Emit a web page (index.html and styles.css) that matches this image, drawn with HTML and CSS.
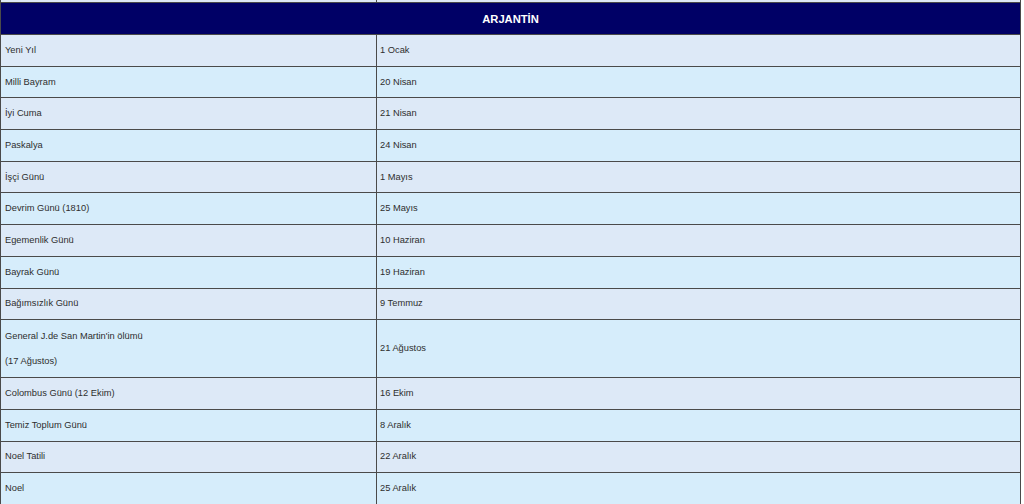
FILE: index.html
```html
<!DOCTYPE html>
<html lang="tr">
<head>
<meta charset="utf-8">
<title>Arjantin Tatilleri</title>
<link rel="stylesheet" href="styles.css">
</head>
<body>
<table class="holidays">
  <tr class="prev"><td class="c1"></td><td class="c2"></td></tr>
  <tr class="head"><th colspan="2">ARJANTİN</th></tr>
  <tr class="odd"><td>Yeni Yıl</td><td>1 Ocak</td></tr>
  <tr class="even"><td>Milli Bayram</td><td>20 Nisan</td></tr>
  <tr class="odd"><td>İyi Cuma</td><td>21 Nisan</td></tr>
  <tr class="even"><td>Paskalya</td><td>24 Nisan</td></tr>
  <tr class="odd"><td>İşçi Günü</td><td>1 Mayıs</td></tr>
  <tr class="even"><td>Devrim Günü (1810)</td><td>25 Mayıs</td></tr>
  <tr class="odd"><td>Egemenlik Günü</td><td>10 Haziran</td></tr>
  <tr class="even"><td>Bayrak Günü</td><td>19 Haziran</td></tr>
  <tr class="odd"><td>Bağımsızlık Günü</td><td>9 Temmuz</td></tr>
  <tr class="even"><td class="two">General J.de San Martin'in ölümü<br>(17 Ağustos)</td><td>21 Ağustos</td></tr>
  <tr class="odd"><td>Colombus Günü (12 Ekim)</td><td>16 Ekim</td></tr>
  <tr class="even"><td>Temiz Toplum Günü</td><td>8 Aralık</td></tr>
  <tr class="odd"><td>Noel Tatili</td><td>22 Aralık</td></tr>
  <tr class="even"><td>Noel</td><td>25 Aralık</td></tr>
</table>
</body>
</html>
```

FILE: styles.css
```css
html, body {
  margin: 0;
  padding: 0;
  background: #ffffff;
}

.holidays {
  width: 1021px;
  border-collapse: collapse;
  table-layout: fixed;
  font-family: "Liberation Sans", Arial, sans-serif;
  font-size: 9.3px;
  color: #2e2e2e;
}

.holidays td,
.holidays th {
  border: 1px solid #4a4a4a;
}

.holidays td {
  padding: 2.85px 3px 2.85px 4px;
  line-height: 25px;
  vertical-align: middle;
  text-align: left;
}

.holidays td + td {
  padding-left: 3px;
}

.holidays td.two {
  padding-top: 3.5px;
  padding-bottom: 3.5px;
}

.holidays .prev td {
  height: 2px;
  padding: 0;
  line-height: 0;
  background: #dde9f6;
  border-top: none;
}

.holidays .c1 {
  width: 375px;
}

.head th {
  background: #000066;
  color: #ffffff;
  font-weight: bold;
  font-size: 11.2px;
  height: 31px;
  padding: 0;
  text-align: center;
  vertical-align: middle;
}

.odd td {
  background: #dde9f7;
}

.even td {
  background: #d6edfb;
}
```
